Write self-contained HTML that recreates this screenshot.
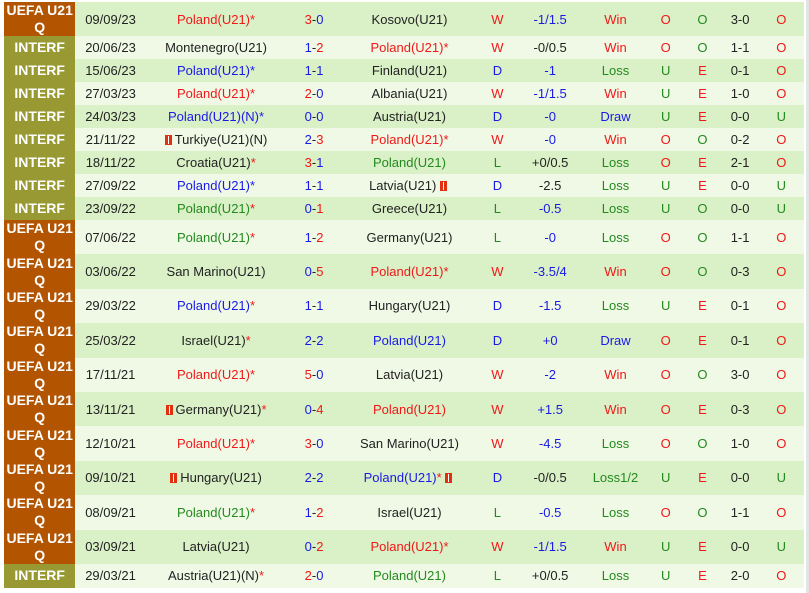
<!DOCTYPE html>
<html><head><meta charset="utf-8"><style>
body{margin:0;background:#fff;width:809px;height:593px;overflow:hidden;font-family:"Liberation Sans",Arial,sans-serif;font-size:13px}
.bar{position:absolute;left:806px;top:0;width:3px;height:593px;background:#e4e4e4}
table{position:absolute;left:4px;top:2px;border-collapse:collapse;table-layout:fixed;width:800px}
td{padding:0;text-align:center;color:#222;white-space:nowrap;line-height:15px}
tr.a td{background:#daf0c7}tr.b td{background:#f0f9e6}
td.c{color:#fff;font-weight:bold;font-size:14px;line-height:17px}
td.u{background:#b35500!important}td.i{background:#999933!important}
tr.h{height:34.4px}tr.s{height:23px}
.r{color:#f01818}.bl{color:#1a1ae6}.g{color:#238a1e}.k{color:#222}
.f{display:inline-block;width:7px;height:10px;background:#e03010;border-left:0;position:relative;vertical-align:-1px;margin-right:3px}
.f:after{content:"";position:absolute;left:3px;top:1px;width:1px;height:8px;background:#fff}
</style></head><body>
<div class="bar"></div>
<table>
<colgroup><col style="width:71px"><col style="width:70px"><col style="width:140px"><col style="width:55px"><col style="width:135px"><col style="width:40px"><col style="width:65px"><col style="width:65px"><col style="width:35px"><col style="width:38px"><col style="width:37px"><col style="width:45px"></colgroup>
<tr class="a" style="height:33px"><td class="c u">UEFA U21<br>Q</td><td>09/09/23</td><td class="r">Poland(U21)*</td><td><span class="r">3</span>-<span class="bl">0</span></td><td>Kosovo(U21)</td><td class="r">W</td><td class="bl">-1/1.5</td><td class="r">Win</td><td class="r">O</td><td class="g">O</td><td>3-0</td><td class="r">O</td></tr>
<tr class="b s"><td class="c i">INTERF</td><td>20/06/23</td><td>Montenegro(U21)</td><td><span class="bl">1</span>-<span class="r">2</span></td><td class="r">Poland(U21)*</td><td class="r">W</td><td>-0/0.5</td><td class="r">Win</td><td class="r">O</td><td class="g">O</td><td>1-1</td><td class="r">O</td></tr>
<tr class="a s"><td class="c i">INTERF</td><td>15/06/23</td><td class="bl">Poland(U21)*</td><td><span class="bl">1</span>-<span class="bl">1</span></td><td>Finland(U21)</td><td class="bl">D</td><td class="bl">-1</td><td class="g">Loss</td><td class="g">U</td><td class="r">E</td><td>0-1</td><td class="r">O</td></tr>
<tr class="b s"><td class="c i">INTERF</td><td>27/03/23</td><td class="r">Poland(U21)*</td><td><span class="r">2</span>-<span class="bl">0</span></td><td>Albania(U21)</td><td class="r">W</td><td class="bl">-1/1.5</td><td class="r">Win</td><td class="g">U</td><td class="r">E</td><td>1-0</td><td class="r">O</td></tr>
<tr class="a s"><td class="c i">INTERF</td><td>24/03/23</td><td class="bl">Poland(U21)(N)*</td><td><span class="bl">0</span>-<span class="bl">0</span></td><td>Austria(U21)</td><td class="bl">D</td><td class="bl">-0</td><td class="bl">Draw</td><td class="g">U</td><td class="r">E</td><td>0-0</td><td class="g">U</td></tr>
<tr class="b s"><td class="c i">INTERF</td><td>21/11/22</td><td><span class="f"></span>Turkiye(U21)(N)</td><td><span class="bl">2</span>-<span class="r">3</span></td><td class="r">Poland(U21)*</td><td class="r">W</td><td class="bl">-0</td><td class="r">Win</td><td class="r">O</td><td class="g">O</td><td>0-2</td><td class="r">O</td></tr>
<tr class="a s"><td class="c i">INTERF</td><td>18/11/22</td><td>Croatia(U21)<span class="r">*</span></td><td><span class="r">3</span>-<span class="bl">1</span></td><td class="g">Poland(U21)</td><td class="g">L</td><td>+0/0.5</td><td class="g">Loss</td><td class="r">O</td><td class="r">E</td><td>2-1</td><td class="r">O</td></tr>
<tr class="b s"><td class="c i">INTERF</td><td>27/09/22</td><td class="bl">Poland(U21)*</td><td><span class="bl">1</span>-<span class="bl">1</span></td><td>Latvia(U21) <span class="f"></span></td><td class="bl">D</td><td>-2.5</td><td class="g">Loss</td><td class="g">U</td><td class="r">E</td><td>0-0</td><td class="g">U</td></tr>
<tr class="a s"><td class="c i">INTERF</td><td>23/09/22</td><td class="g">Poland(U21)<span class="r">*</span></td><td><span class="bl">0</span>-<span class="r">1</span></td><td>Greece(U21)</td><td class="g">L</td><td class="bl">-0.5</td><td class="g">Loss</td><td class="g">U</td><td class="g">O</td><td>0-0</td><td class="g">U</td></tr>
<tr class="b h"><td class="c u">UEFA U21<br>Q</td><td>07/06/22</td><td class="g">Poland(U21)<span class="r">*</span></td><td><span class="bl">1</span>-<span class="r">2</span></td><td>Germany(U21)</td><td class="g">L</td><td class="bl">-0</td><td class="g">Loss</td><td class="r">O</td><td class="g">O</td><td>1-1</td><td class="r">O</td></tr>
<tr class="a h"><td class="c u">UEFA U21<br>Q</td><td>03/06/22</td><td>San Marino(U21)</td><td><span class="bl">0</span>-<span class="r">5</span></td><td class="r">Poland(U21)*</td><td class="r">W</td><td class="bl">-3.5/4</td><td class="r">Win</td><td class="r">O</td><td class="g">O</td><td>0-3</td><td class="r">O</td></tr>
<tr class="b h"><td class="c u">UEFA U21<br>Q</td><td>29/03/22</td><td class="bl">Poland(U21)<span class="r">*</span></td><td><span class="bl">1</span>-<span class="bl">1</span></td><td>Hungary(U21)</td><td class="bl">D</td><td class="bl">-1.5</td><td class="g">Loss</td><td class="g">U</td><td class="r">E</td><td>0-1</td><td class="r">O</td></tr>
<tr class="a h"><td class="c u">UEFA U21<br>Q</td><td>25/03/22</td><td>Israel(U21)<span class="r">*</span></td><td><span class="bl">2</span>-<span class="bl">2</span></td><td class="bl">Poland(U21)</td><td class="bl">D</td><td class="bl">+0</td><td class="bl">Draw</td><td class="r">O</td><td class="r">E</td><td>0-1</td><td class="r">O</td></tr>
<tr class="b h"><td class="c u">UEFA U21<br>Q</td><td>17/11/21</td><td class="r">Poland(U21)*</td><td><span class="r">5</span>-<span class="bl">0</span></td><td>Latvia(U21)</td><td class="r">W</td><td class="bl">-2</td><td class="r">Win</td><td class="r">O</td><td class="g">O</td><td>3-0</td><td class="r">O</td></tr>
<tr class="a h"><td class="c u">UEFA U21<br>Q</td><td>13/11/21</td><td><span class="f"></span>Germany(U21)<span class="r">*</span></td><td><span class="bl">0</span>-<span class="r">4</span></td><td class="r">Poland(U21)</td><td class="r">W</td><td class="bl">+1.5</td><td class="r">Win</td><td class="r">O</td><td class="r">E</td><td>0-3</td><td class="r">O</td></tr>
<tr class="b h"><td class="c u">UEFA U21<br>Q</td><td>12/10/21</td><td class="r">Poland(U21)*</td><td><span class="r">3</span>-<span class="bl">0</span></td><td>San Marino(U21)</td><td class="r">W</td><td class="bl">-4.5</td><td class="g">Loss</td><td class="r">O</td><td class="g">O</td><td>1-0</td><td class="r">O</td></tr>
<tr class="a h"><td class="c u">UEFA U21<br>Q</td><td>09/10/21</td><td><span class="f"></span>Hungary(U21)</td><td><span class="bl">2</span>-<span class="bl">2</span></td><td class="bl">Poland(U21)<span class="r">*</span> <span class="f"></span></td><td class="bl">D</td><td>-0/0.5</td><td class="g">Loss1/2</td><td class="g">U</td><td class="r">E</td><td>0-0</td><td class="g">U</td></tr>
<tr class="b h"><td class="c u">UEFA U21<br>Q</td><td>08/09/21</td><td class="g">Poland(U21)<span class="r">*</span></td><td><span class="bl">1</span>-<span class="r">2</span></td><td>Israel(U21)</td><td class="g">L</td><td class="bl">-0.5</td><td class="g">Loss</td><td class="r">O</td><td class="g">O</td><td>1-1</td><td class="r">O</td></tr>
<tr class="a h"><td class="c u">UEFA U21<br>Q</td><td>03/09/21</td><td>Latvia(U21)</td><td><span class="bl">0</span>-<span class="r">2</span></td><td class="r">Poland(U21)*</td><td class="r">W</td><td class="bl">-1/1.5</td><td class="r">Win</td><td class="g">U</td><td class="r">E</td><td>0-0</td><td class="g">U</td></tr>
<tr class="b" style="height:24px"><td class="c i">INTERF</td><td>29/03/21</td><td>Austria(U21)(N)<span class="r">*</span></td><td><span class="r">2</span>-<span class="bl">0</span></td><td class="g">Poland(U21)</td><td class="g">L</td><td>+0/0.5</td><td class="g">Loss</td><td class="g">U</td><td class="r">E</td><td>2-0</td><td class="r">O</td></tr>
</table>
</body></html>
